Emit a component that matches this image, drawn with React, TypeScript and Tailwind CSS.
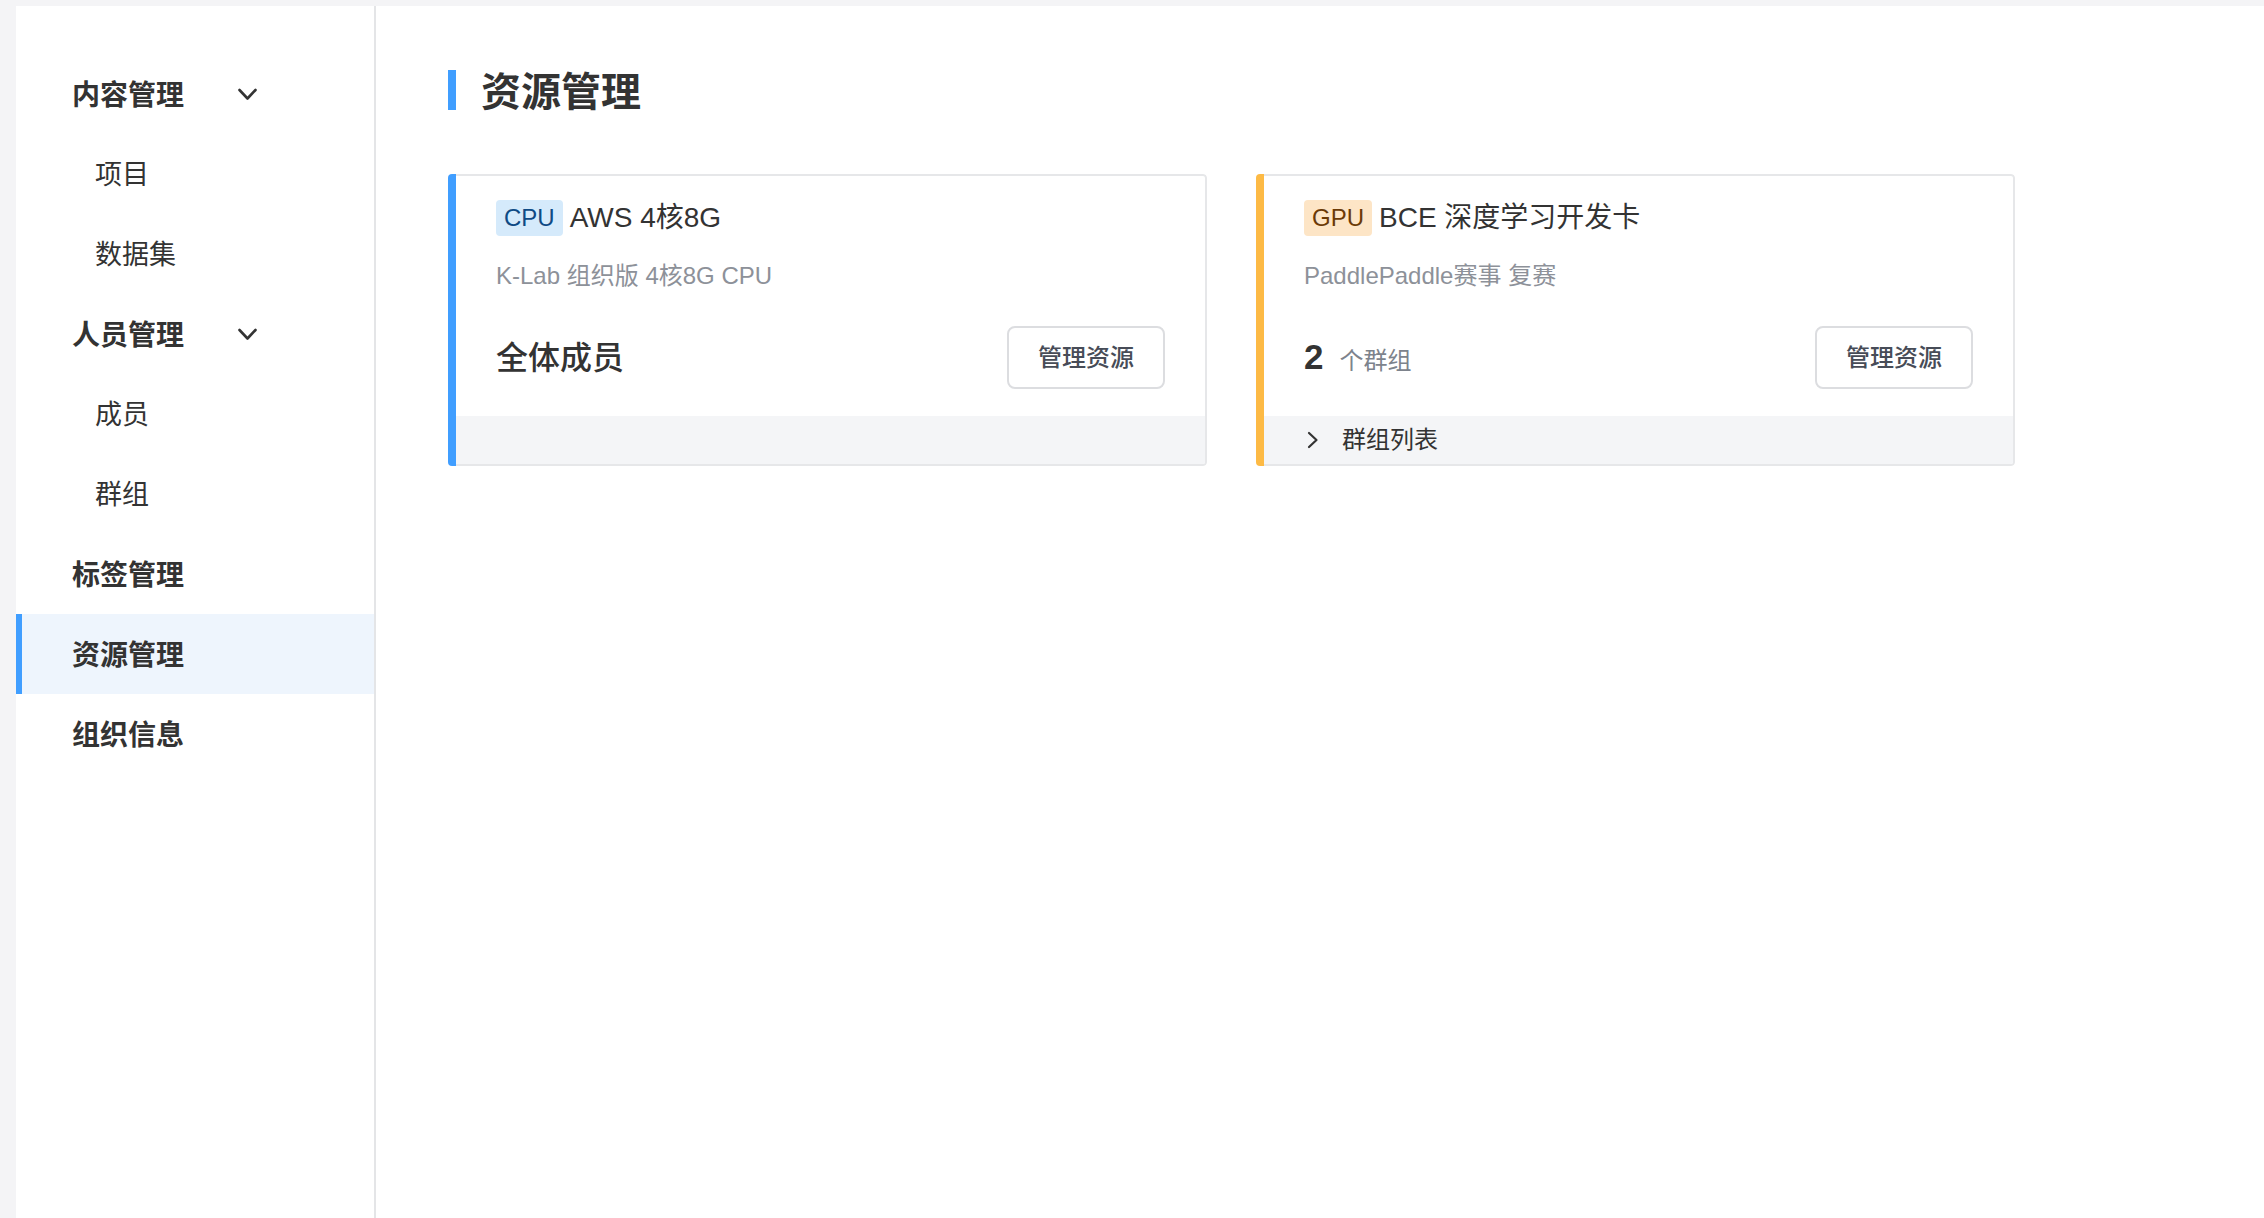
import React from 'react';

const FONT = "font-['Liberation_Sans','Noto_Sans_CJK_SC',sans-serif]";

const Chevron: React.FC = () => (
  <svg width="19" height="13" viewBox="0 0 19 13" fill="none">
    <polyline points="1.5,2 9.5,10.5 17.5,2" stroke="#333" strokeWidth="2.6" strokeLinecap="round" strokeLinejoin="round" />
  </svg>
);

const ChevronRight: React.FC = () => (
  <svg width="12" height="18" viewBox="0 0 12 18" fill="none">
    <polyline points="2,2 9.5,9 2,16" stroke="#333" strokeWidth="2.2" strokeLinecap="round" strokeLinejoin="round" />
  </svg>
);

type MenuItem = { label: string; level: 1 | 2; expandable?: boolean; active?: boolean };

const MENU: MenuItem[] = [
  { label: '内容管理', level: 1, expandable: true },
  { label: '项目', level: 2 },
  { label: '数据集', level: 2 },
  { label: '人员管理', level: 1, expandable: true },
  { label: '成员', level: 2 },
  { label: '群组', level: 2 },
  { label: '标签管理', level: 1 },
  { label: '资源管理', level: 1, active: true },
  { label: '组织信息', level: 1 },
];

const Sidebar: React.FC = () => (
  <aside className="w-[360px] shrink-0 bg-white border-r-2 border-[#e4e5e7] pt-12">
    {MENU.map((item) => {
      if (item.level === 2) {
        return (
          <div key={item.label} className="h-20 flex items-center pl-[79px] pt-[3px] text-[27px] text-[#333]">
            {item.label}
          </div>
        );
      }
      return (
        <div
          key={item.label}
          className={
            item.active
              ? 'h-20 flex items-center border-l-[6px] border-[#409eff] bg-[#eef5fd] pl-[50px]'
              : 'h-20 flex items-center pl-[56px]'
          }
        >
          <span className="w-[166px] pt-[3px] text-[28px] font-bold text-[#333]">{item.label}</span>
          {item.expandable && <Chevron />}
        </div>
      );
    })}
  </aside>
);

type CardProps = {
  accent: string;
  tag: string;
  tagClass: string;
  title: string;
  subtitle: string;
  summary: React.ReactNode;
  footer?: React.ReactNode;
};

const ResourceCard: React.FC<CardProps> = ({ accent, tag, tagClass, title, subtitle, summary, footer }) => (
  <div className="w-[759px] flex rounded-[4px] overflow-hidden">
    <div className={`w-2 shrink-0 ${accent}`}></div>
    <div className="flex-1 border-y-2 border-r-2 border-[#e6e7e9] rounded-r-[4px] overflow-hidden">
      <div className="px-10 pt-6 pb-[27px]">
        <div className="flex items-center h-9">
          <span className={`h-9 px-2 rounded-[4px] text-[24px] leading-9 ${tagClass}`}>{tag}</span>
          <span className="ml-[7px] text-[28px] text-[#333]">{title}</span>
        </div>
        <div className="mt-6 text-[24px] leading-8 text-[#8d9199]">{subtitle}</div>
        <div className="mt-[34px] flex items-center justify-between">
          <div>{summary}</div>
          <button className="w-[158px] h-[63px] border-2 border-[#dcdde0] rounded-[8px] bg-white text-[24px] font-medium text-[#474c57]">
            管理资源
          </button>
        </div>
      </div>
      <div className="h-12 bg-[#f4f5f7] flex items-center px-10">{footer}</div>
    </div>
  </div>
);

const App: React.FC = () => {
  return (
    <div className={`h-screen flex bg-[#f4f4f6] pt-[6px] pl-4 ${FONT}`}>
      <Sidebar />
      <main className="flex-1 bg-white pl-[72px] pt-16">
        <div className="flex items-center h-10">
          <div className="w-2 h-10 bg-[#409eff]"></div>
          <h1 className="ml-[25px] pt-[3px] text-[40px] leading-10 font-bold text-[#333]">资源管理</h1>
        </div>

        <div className="mt-16 flex gap-[49px]">
          <ResourceCard
            accent="bg-[#409eff]"
            tag="CPU"
            tagClass="bg-[#d5eafb] text-[#0f4a85]"
            title="AWS 4核8G"
            subtitle="K-Lab 组织版 4核8G CPU"
            summary={<span className="text-[32px] font-medium text-[#333]">全体成员</span>}
          />
          <ResourceCard
            accent="bg-[#fdba45]"
            tag="GPU"
            tagClass="bg-[#fde5c6] text-[#6b3a06]"
            title="BCE 深度学习开发卡"
            subtitle="PaddlePaddle赛事 复赛"
            summary={
              <div className="flex items-baseline">
                <span className="text-[35px] font-semibold text-[#333]">2</span>
                <span className="ml-4 text-[24px] text-[#7d838c]">个群组</span>
              </div>
            }
            footer={
              <div className="flex items-center">
                <span className="ml-[3px]">
                  <ChevronRight />
                </span>
                <span className="ml-[23px] text-[24px] text-[#333]">群组列表</span>
              </div>
            }
          />
        </div>
      </main>
    </div>
  );
};

export default App;
